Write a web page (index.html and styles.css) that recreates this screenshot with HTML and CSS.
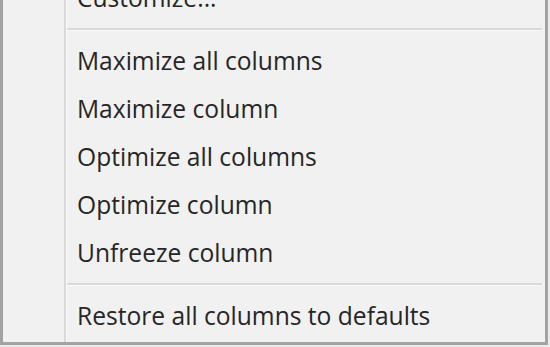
FILE: index.html
```html
<!DOCTYPE html>
<html>
<head>
<meta charset="utf-8">
<link rel="stylesheet" href="styles.css">
</head>
<body>
<div class="menu">
  <div class="gutter"></div>
  <div class="list">
    <div class="item">Customize...</div>
    <div class="sep"></div>
    <div class="item">Maximize all columns</div>
    <div class="item">Maximize column</div>
    <div class="item">Optimize all columns</div>
    <div class="item">Optimize column</div>
    <div class="item">Unfreeze column</div>
    <div class="sep"></div>
    <div class="item">Restore all columns to defaults</div>
  </div>
</div>
</body>
</html>
```
FILE: styles.css
```css
html, body {
  margin: 0;
  padding: 0;
  background: #ececec;
  width: 550px;
  height: 347px;
  overflow: hidden;
}
.menu {
  display: flex;
  width: 542px;
  margin-top: -26px;
  background: #f1f1f1;
  border-left: 3px solid #a3a3a3;
  border-right: 3px solid #a3a3a3;
  border-bottom: 3px solid #a3a3a3;
  font-family: "Open Sans", "Noto Sans", sans-serif;
  font-size: 24.6px;
  color: #262626;
}
.gutter {
  width: 61px;
  flex: none;
  border-right: 2px solid #d9d9d9;
}
.list {
  flex: 1;
  border-left: 1px solid #fbfbfb;
  padding-bottom: 2px;
}
.item {
  height: 48px;
  line-height: 48px;
  padding-left: 10px;
  white-space: nowrap;
}
.sep {
  height: 15px;
  display: flex;
  align-items: center;
  padding-right: 3px;
}
.sep::before {
  content: "";
  flex: 1;
  height: 2px;
  background: #d9d9d9;
  border-bottom: 1px solid #fafafa;
}
```
